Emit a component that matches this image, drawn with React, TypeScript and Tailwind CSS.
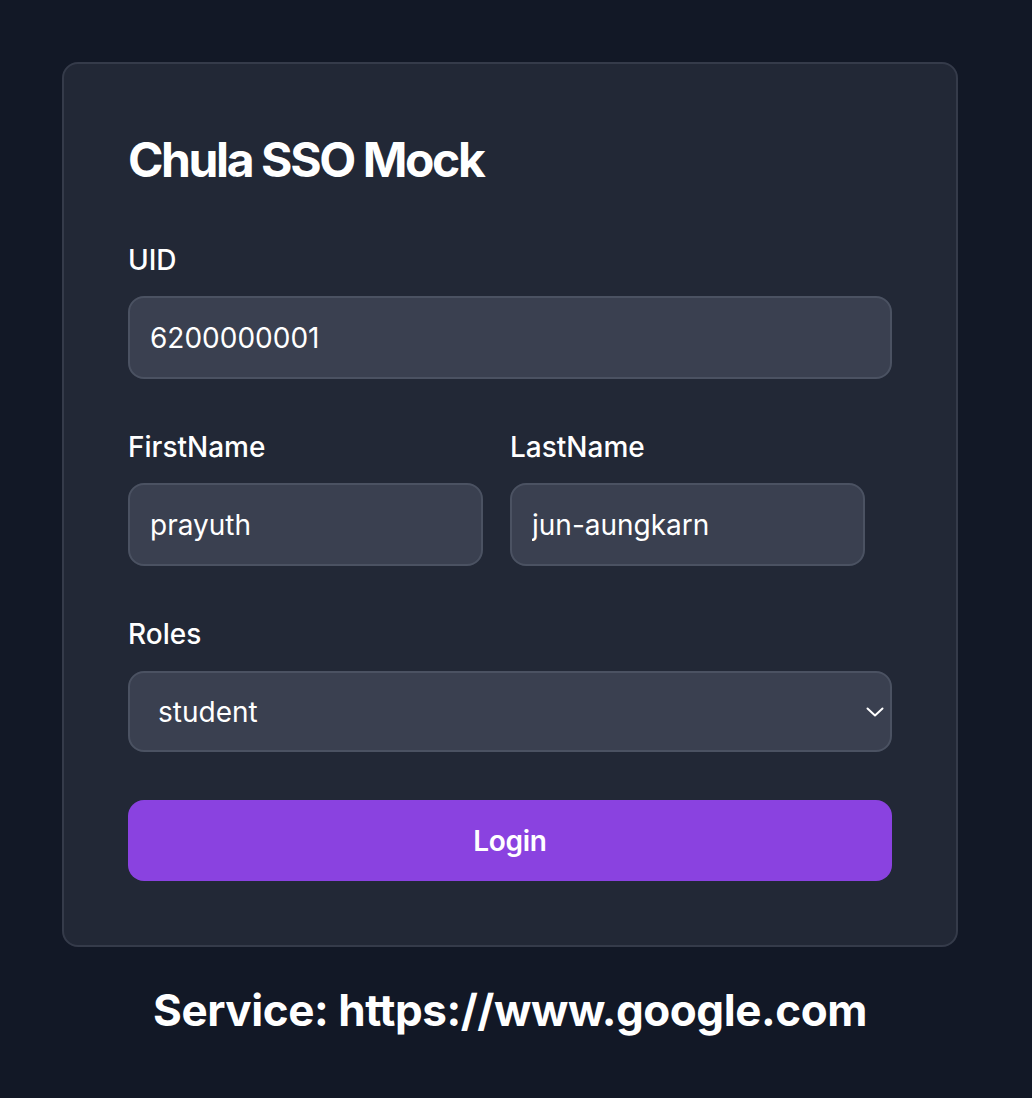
import React from "react";

export default function App() {
  return (
    <div className="min-h-screen w-full bg-[#121826] pt-[62px] pl-[62px] pb-10" style={{ fontFamily: "Inter, 'Noto Sans', sans-serif" }}>
      <div className="w-[896px]">
        <div className="rounded-[16px] border-2 border-[#353b4a] bg-[#222836] px-[64px] pt-[64px] pb-[64px]">
          <h1 className="text-[48px] leading-[64px] font-bold tracking-[-0.05em] text-white">Chula SSO Mock</h1>

          <div className="mt-[48px]">
            <label className="block text-[28px] leading-[40px] font-medium text-white">UID</label>
            <input
              readOnly
              value="6200000001"
              className="mt-[16px] block h-[83px] w-full rounded-[16px] border-2 border-[#4b5262] bg-[#3a4050] px-[20px] text-[28px] text-white outline-none"
            />
          </div>

          <div className="mt-[48px] flex gap-[27px]">
            <div className="w-[355px]">
              <label className="block text-[28px] leading-[40px] font-medium text-white">FirstName</label>
              <input
                readOnly
                value="prayuth"
                className="mt-[16px] block h-[83px] w-full rounded-[16px] border-2 border-[#4b5262] bg-[#3a4050] px-[20px] text-[28px] text-white outline-none"
              />
            </div>
            <div className="w-[355px]">
              <label className="block text-[28px] leading-[40px] font-medium text-white">LastName</label>
              <input
                readOnly
                value="jun-aungkarn"
                className="mt-[16px] block h-[83px] w-full rounded-[16px] border-2 border-[#4b5262] bg-[#3a4050] px-[20px] text-[28px] text-white outline-none"
              />
            </div>
          </div>

          <div className="mt-[48px]">
            <label className="block text-[28px] leading-[40px] font-medium text-white">Roles</label>
            <div className="relative mt-[17px]">
              <select
                defaultValue="student"
                className="block h-[81px] w-full appearance-none rounded-[16px] border-2 border-[#4b5262] bg-[#3a4050] pl-[28px] pr-[40px] text-[28px] text-white outline-none"
              >
                <option value="student">student</option>
                <option value="admin">admin</option>
              </select>
              <svg
                className="pointer-events-none absolute right-[8px] top-1/2 -translate-y-1/2"
                width="18"
                height="10"
                viewBox="0 0 18 10"
                fill="none"
              >
                <path d="M1.5 1.5 L9 8.5 L16.5 1.5" stroke="white" strokeWidth="2" strokeLinecap="round" strokeLinejoin="round" />
              </svg>
            </div>
          </div>

          <button className="mt-[48px] flex h-[81px] w-full items-center justify-center rounded-[16px] bg-[#8a42e0] text-[28px] font-semibold tracking-[-0.01em] text-white">
            Login
          </button>
        </div>

        <p className="mt-[37px] text-center text-[44px] leading-[53px] font-bold text-white tracking-[-0.01em]">
          Service: https://www.google.com
        </p>
      </div>
    </div>
  );
}
